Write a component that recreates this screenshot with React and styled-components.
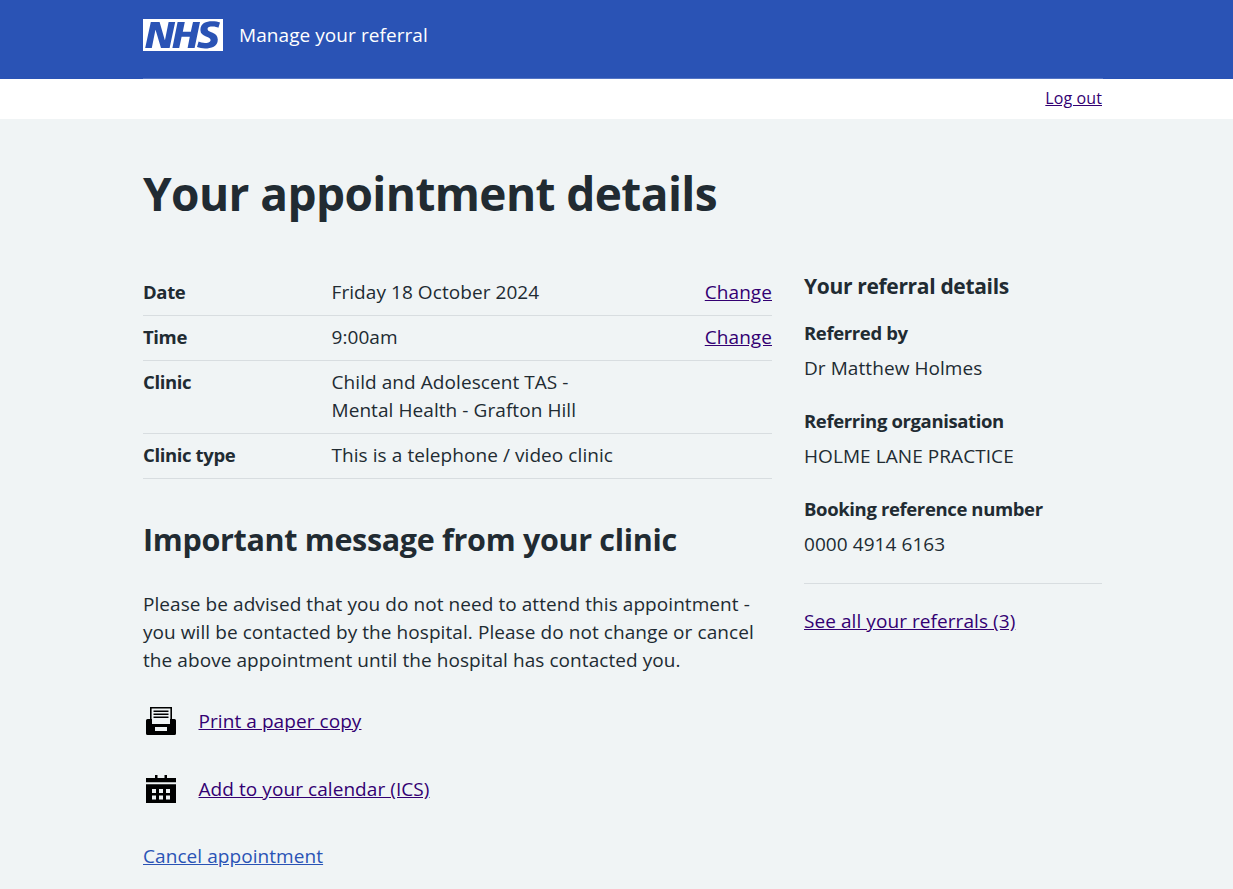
import React from 'react';
import styled, { createGlobalStyle } from 'styled-components';

const Global = createGlobalStyle`
  html, body { margin: 0; padding: 0; }
  body {
    background: #f0f4f5;
    color: #212b32;
    font-family: "Open Sans", "Noto Sans", Arial, sans-serif;
    font-size: 19px;
    line-height: 28px;
    letter-spacing: 0.07px;
  }
`;

const Wrap = styled.div`
  width: 960px;
  margin-left: 143px;
`;

const Header = styled.header`
  background: #2a53b5;
  height: 79px;
`;

const HeaderInner = styled(Wrap)`
  height: 79px;
  box-sizing: border-box;
  padding-top: 19px;
  display: flex;
  align-items: flex-start;
  gap: 16px;
  border-bottom: 1px solid #5475c4;
`;

const Logo = styled.svg`
  width: 80px;
  height: 32px;
  display: block;
`;

const ServiceName = styled.span`
  color: #fff;
  font-size: 19px;
  line-height: 32px;
`;

const SubNav = styled.nav`
  background: #fff;
  height: 40px;
`;

const SubNavInner = styled.div`
  width: 959px;
  margin-left: 143px;
  display: flex;
  justify-content: flex-end;
  font-size: 16px;
  line-height: 38px;
  letter-spacing: 0.1px;
`;

const VisitedLink = styled.a`
  color: #330072;
  text-decoration: underline;
  cursor: pointer;
`;

const CancelLink = styled.a`
  color: #2a53b5;
  text-decoration: underline;
  cursor: pointer;
`;

const Main = styled(Wrap)`
  padding-top: 40px;
`;

const Title = styled.h1`
  font-size: 46px;
  line-height: 68px;
  font-weight: 700;
  letter-spacing: -0.6px;
  margin: 0 0 44px;
`;

const Columns = styled.div`
  display: grid;
  grid-template-columns: 629px 298px;
  column-gap: 32px;
  align-items: start;
`;

const Summary = styled.dl`
  margin: 0;
`;

const SummaryRow = styled.div`
  display: grid;
  grid-template-columns: 188.5px 1fr auto;
  padding: 7px 0 9px;
  border-bottom: 1px solid #d8dde0;
`;

const Term = styled.dt`
  font-size: 18.5px;
  font-weight: 700;
  letter-spacing: -0.37px;
`;

const Value = styled.dd`
  margin: 0;
`;

const SectionTitle = styled.h2`
  font-size: 30.5px;
  line-height: 40px;
  font-weight: 700;
  letter-spacing: -0.32px;
  margin: 40px 0 31px;
`;

const Para = styled.p`
  margin: 0;
`;

const ActionRow = styled.div`
  display: flex;
  align-items: center;
  height: 28px;
  margin-top: ${props => props.$top}px;
`;

const ActionIcon = styled.svg`
  width: 30px;
  height: 28px;
  margin: 0 22.5px 0 3px;
  display: block;
  fill: #000;
`;

const CancelRow = styled.div`
  margin-top: 39px;
  padding-bottom: 19px;
`;

const AsideTitle = styled.h3`
  font-size: 21px;
  line-height: 28px;
  font-weight: 700;
  letter-spacing: -0.33px;
  margin: 1px 0 19px;
`;

const AsideLabel = styled.h4`
  font-size: 18.5px;
  line-height: 28px;
  font-weight: 700;
  letter-spacing: -0.37px;
  margin: 0 0 7px;
`;

const AsideText = styled.p`
  margin: 0 0 25px;
`;

const Rule = styled.hr`
  border: 0;
  border-top: 1px solid #d8dde0;
  margin: 25px 0 23px;
`;

const rows = [
  { term: 'Date', value: 'Friday 18 October 2024', change: true },
  { term: 'Time', value: '9:00am', change: true },
  { term: 'Clinic', value: <>Child and Adolescent TAS -<br />Mental Health - Grafton Hill</> },
  { term: 'Clinic type', value: 'This is a telephone / video clinic' },
];

const referral = [
  { label: 'Referred by', text: 'Dr Matthew Holmes' },
  { label: 'Referring organisation', text: 'HOLME LANE PRACTICE' },
];

export default function App() {
  return (
    <>
      <Global />
      <Header>
        <HeaderInner>
          <Logo viewBox="0 0 40 16" aria-label="NHS">
            <path fill="#fff" d="M0 0h40v16H0z" />
            <path fill="#2a53b5" d="M3.9 1.5h4.4l2.6 9h.1l1.8-9h3.3l-2.8 13H9l-2.7-9h-.1l-1.8 9H1.1M17.3 1.5h3.6l-1 4.9h4L25 1.5h3.5l-2.7 13h-3.5l1.1-5.6h-4.1l-1.2 5.6h-3.4M37.7 4.4c-.7-.3-1.6-.6-2.9-.6-1.4 0-2.5.2-2.5 1.3 0 1.8 5.1 1.2 5.1 5.1 0 3.6-3.3 4.5-6.4 4.5-1.3 0-2.9-.3-4-.7l.8-2.7c.7.4 2.1.7 3.2.7s2.8-.2 2.8-1.5c0-2.1-5.1-1.3-5.1-5 0-3.4 2.9-4.4 5.8-4.4 1.6 0 3.1.2 4 .6" />
          </Logo>
          <ServiceName>Manage your referral</ServiceName>
        </HeaderInner>
      </Header>
      <SubNav>
        <SubNavInner>
          <VisitedLink>Log out</VisitedLink>
        </SubNavInner>
      </SubNav>
      <Main>
        <Title>Your appointment details</Title>
        <Columns>
          <div>
            <Summary>
              {rows.map(r => (
                <SummaryRow key={r.term}>
                  <Term>{r.term}</Term>
                  <Value>{r.value}</Value>
                  {r.change && <VisitedLink>Change</VisitedLink>}
                </SummaryRow>
              ))}
            </Summary>
            <SectionTitle>Important message from your clinic</SectionTitle>
            <Para>
              Please be advised that you do not need to attend this appointment -
              you will be contacted by the hospital. Please do not change or cancel
              the above appointment until the hospital has contacted you.
            </Para>
            <ActionRow $top={33}>
              <ActionIcon viewBox="0 0 30 28">
                <path fillRule="evenodd" d="M4 0h22v13h-1.600V1.600H5.600V13H4zM7.500 3.400h15v1.600h-15zM7.500 6.400h15v1.600h-15zM7.500 9.400h15v1.600h-15z" />
                <path fillRule="evenodd" d="M1.500 12H6v5h18v-5h4.500a1.500 1.500 0 0 1 1.500 1.500v13a1.500 1.500 0 0 1-1.500 1.500h-27A1.500 1.500 0 0 1 0 26.500v-13A1.500 1.500 0 0 1 1.500 12zM9 20v4h12v-4z" />
              </ActionIcon>
              <VisitedLink>Print a paper copy</VisitedLink>
            </ActionRow>
            <ActionRow $top={40}>
              <ActionIcon viewBox="0 0 30 28">
                <path fillRule="evenodd" d="M9 0h2.500v3h7V0H21v3h9v4.300H0V3h9zM0 9.300h30V28H0zM6 14v4h4v-4zM13 14v4h4v-4zM20 14v4h4v-4zM6 20.500v4h4v-4zM13 20.500v4h4v-4zM20 20.500v4h4v-4z" />
              </ActionIcon>
              <VisitedLink>Add to your calendar (ICS)</VisitedLink>
            </ActionRow>
            <CancelRow>
              <CancelLink>Cancel appointment</CancelLink>
            </CancelRow>
          </div>
          <aside>
            <AsideTitle>Your referral details</AsideTitle>
            {referral.map(r => (
              <div key={r.label}>
                <AsideLabel>{r.label}</AsideLabel>
                <AsideText>{r.text}</AsideText>
              </div>
            ))}
            <AsideLabel>Booking reference number</AsideLabel>
            <AsideText>0000 4914 6163</AsideText>
            <Rule />
            <VisitedLink>See all your referrals (3)</VisitedLink>
          </aside>
        </Columns>
      </Main>
    </>
  );
}
